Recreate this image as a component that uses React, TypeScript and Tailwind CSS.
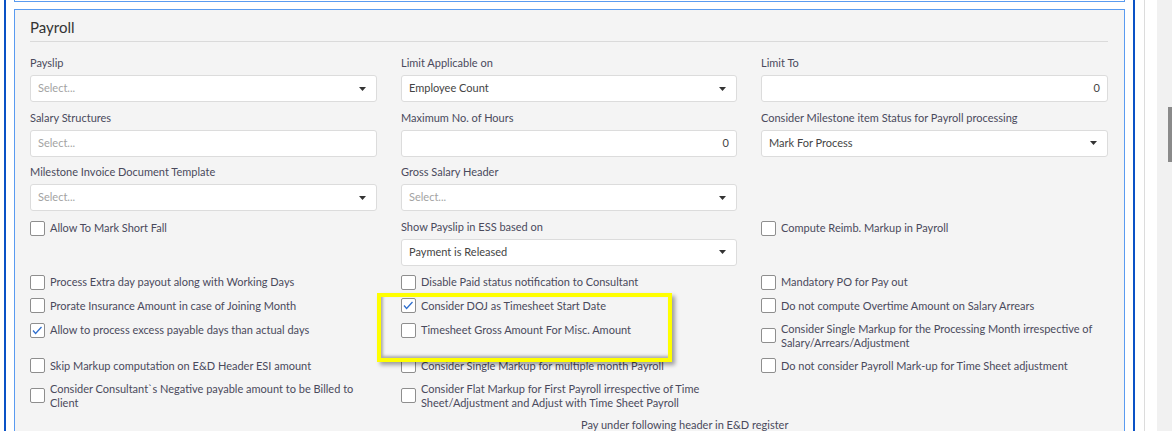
import React from "react";

const font = { fontFamily: "Lato, 'Open Sans', Arial, sans-serif" };

function Caret() {
  return (
    <svg width="7" height="4" viewBox="0 0 7 4" className="shrink-0">
      <path d="M0 0h7L3.5 4z" fill="#333" />
    </svg>
  );
}

function Field({ label, children }: { label: string; children: React.ReactNode }) {
  return (
    <div>
      <div className="leading-[14px] mb-[5px] whitespace-nowrap">{label}</div>
      {children}
    </div>
  );
}

function SelectBox({ value, placeholder }: { value?: string; placeholder?: string }) {
  return (
    <div className="h-[27px] bg-white border border-[#dcdcdc] rounded-[3px] flex items-center justify-between pl-[7px] pr-[10px]">
      {value ? (
        <span className="text-[#444]">{value}</span>
      ) : (
        <span className="text-[#a3a3a3]">{placeholder}</span>
      )}
      <Caret />
    </div>
  );
}

function NumberBox({ value }: { value: string }) {
  return (
    <div className="h-[27px] bg-white border border-[#dcdcdc] rounded-[3px] flex items-center justify-end pr-[7px] text-[#444]">
      {value}
    </div>
  );
}

function Check({ label, checked }: { label: React.ReactNode; checked?: boolean }) {
  return (
    <div className="flex items-center gap-[5px]">
      <span className="w-[15px] h-[15px] shrink-0 bg-white border border-[#8e8e8e] rounded-[2px] flex items-center justify-center">
        {checked && (
          <svg width="13" height="13" viewBox="0 0 13 13">
            <path d="M2 6.5l2.6 3L10.5 3" fill="none" stroke="#2f6fce" strokeWidth="1.3" />
          </svg>
        )}
      </span>
      <span className="leading-[14px]">{label}</span>
    </div>
  );
}

export default function App() {
  return (
    <div className="relative flex h-[431px] w-[1172px] overflow-hidden bg-white text-[11px] text-[#4a4a5c]" style={font}>
      <div className="ml-[4px] w-[1131px] border-x-2 border-[#0a52c6] shrink-0">
        <div className="ml-[8px] w-[1111px] h-[2px] border-x border-b border-[#5a9bf0]" />
        <div className="ml-[8px] mt-[7px] w-[1111px] h-[440px] border border-[#5a9bf0] bg-[#f4f4f4] pl-[15px] pr-[16px]">
          <div className="pt-[7px] pb-[4px] border-b border-[#dadada] text-[15px] leading-[20px] text-[#333]">Payroll</div>

          <div className="mt-[14px] grid grid-cols-[347px_336px_347px] gap-x-6 gap-y-[8.5px] items-start">
            <Field label="Payslip">
              <SelectBox placeholder="Select..." />
            </Field>
            <Field label="Limit Applicable on">
              <SelectBox value="Employee Count" />
            </Field>
            <Field label="Limit To">
              <NumberBox value="0" />
            </Field>

            <Field label="Salary Structures">
              <div className="h-[27px] bg-white border border-[#dcdcdc] rounded-[3px] flex items-center pl-[7px] text-[#a3a3a3]">Select...</div>
            </Field>
            <Field label="Maximum No. of Hours">
              <NumberBox value="0" />
            </Field>
            <Field label="Consider Milestone item Status for Payroll processing">
              <SelectBox value="Mark For Process" />
            </Field>

            <Field label="Milestone Invoice Document Template">
              <SelectBox placeholder="Select..." />
            </Field>
            <Field label="Gross Salary Header">
              <SelectBox placeholder="Select..." />
            </Field>
            <div />

            <div className="mt-px">
              <Check label="Allow To Mark Short Fall" />
            </div>
            <Field label="Show Payslip in ESS based on">
              <SelectBox value="Payment is Released" />
            </Field>
            <div className="mt-px">
              <Check label="Compute Reimb. Markup in Payroll" />
            </div>
          </div>

          <div className="mt-[9px] grid grid-cols-[347px_336px_347px] gap-x-6 gap-y-[8.5px] items-start">
            <Check label="Process Extra day payout along with Working Days" />
            <Check label="Disable Paid status notification to Consultant" />
            <Check label="Mandatory PO for Pay out" />

            <Check label="Prorate Insurance Amount in case of Joining Month" />
            <Check label="Consider DOJ as Timesheet Start Date" checked />
            <Check label="Do not compute Overtime Amount on Salary Arrears" />

            <div className="pt-px">
              <Check label="Allow to process excess payable days than actual days" checked />
            </div>
            <div className="pt-px">
              <Check label="Timesheet Gross Amount For Misc. Amount" />
            </div>
            <Check
              label={
                <>
                  Consider Single Markup for the Processing Month irrespective of
                  <br />
                  Salary/Arrears/Adjustment
                </>
              }
            />

            <Check label="Skip Markup computation on E&D Header ESI amount" />
            <Check label="Consider Single Markup for multiple month Payroll" />
            <Check label="Do not consider Payroll Mark-up for Time Sheet adjustment" />

            <Check
              label={
                <>
                  Consider Consultant`s Negative payable amount to be Billed to
                  <br />
                  Client
                </>
              }
            />
            <Check
              label={
                <>
                  Consider Flat Markup for First Payroll irrespective of Time
                  <br />
                  Sheet/Adjustment and Adjust with Time Sheet Payroll
                </>
              }
            />
            <div />

            <div className="col-start-2 col-span-2 pl-[180px] leading-[14px] whitespace-nowrap">
              Pay under following header in E&amp;D register
            </div>
          </div>
        </div>
      </div>

      <div className="w-[9px] shrink-0" />
      <div className="w-px shrink-0 bg-[#dcdcdc]" />
      <div className="w-[12px] shrink-0" />
      <div className="relative flex-1 bg-[#f1f1f1]">
        <div className="absolute left-[11px] top-[107px] w-[6px] h-[55px] bg-[#8a8a8a]" />
      </div>

      <div className="absolute left-[377px] top-[293px] w-[295px] h-[69px] border-4 border-[#ffff00] shadow-[3px_3px_4px_rgba(0,0,0,0.35),inset_2px_-2px_3px_rgba(0,0,0,0.3)]" />
    </div>
  );
}
